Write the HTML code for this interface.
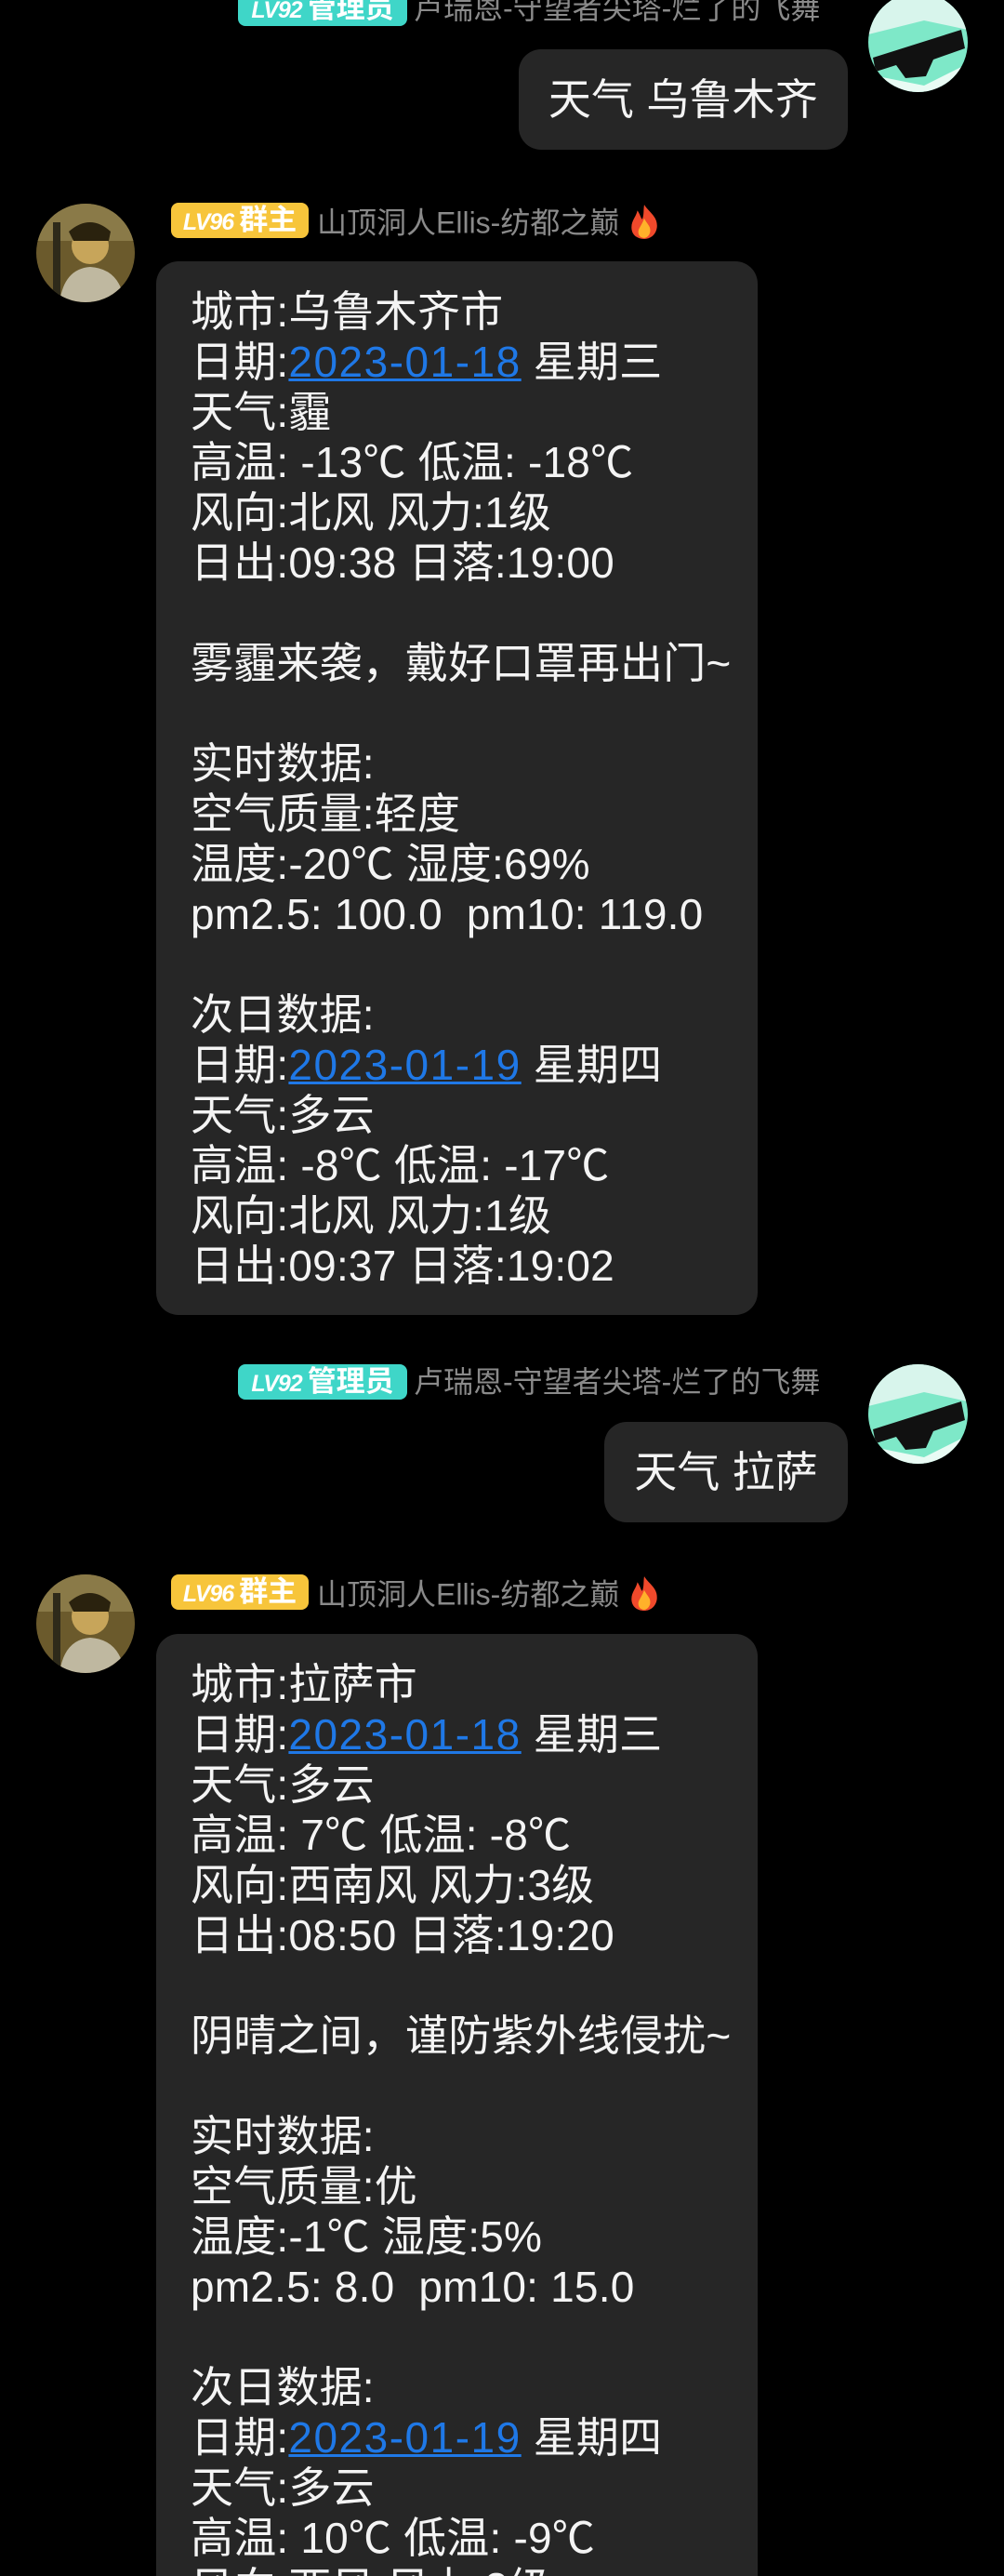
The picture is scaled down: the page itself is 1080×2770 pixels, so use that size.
<!DOCTYPE html>
<html><head><meta charset="utf-8"><style>
*{margin:0;padding:0;box-sizing:border-box}
html,body{width:1080px;height:2770px;background:#000;overflow:hidden}
body{position:relative;font-family:"Liberation Sans","Noto Sans CJK SC",sans-serif}
.badge{position:absolute;height:38px;border-radius:8px;color:#fff;font-weight:bold;font-size:31px;line-height:38px;padding:0 8px;white-space:nowrap;text-align:center}
.badge i{font-style:italic;font-size:25px;letter-spacing:-1px;margin-right:6px}
.adm{background:#3fd6c8;width:182px}
.own{background:#f7c53b;width:148px}
.name{position:absolute;color:#8a8a8a;font-size:32px;line-height:38px;white-space:nowrap;letter-spacing:0px}
.bub{position:absolute;background:#262626;border-radius:24px;color:#f4f4f4;font-size:46px;line-height:54px;white-space:pre;padding:27px 37px;letter-spacing:0.2px}
.bub a{color:#1f78e6;text-decoration:underline;text-decoration-thickness:3px;letter-spacing:1.5px}
.short{padding:0 32px;line-height:108px;font-size:46px;right:168px}
.av{position:absolute;border-radius:50%;overflow:hidden}
</style></head><body>

<div class="badge adm" style="left:256px;top:-10px"><i>LV92</i>管理员</div>
<div class="name" style="left:445px;top:-10px">卢瑞恩-守望者尖塔-烂了的飞舞</div>
<div class="av" style="left:934px;top:-8px;width:107px;height:107px">
<svg width="107" height="107" viewBox="0 0 107 107"><rect width="107" height="107" fill="#7ee8c8"/><path d="M0 0H107V40L60 30 20 40 0 45Z" fill="#d8f5ec"/><path d="M5 70L100 40 104 60 70 72 62 90 40 92 30 78 8 85Z" fill="#111"/><path d="M10 90L60 100 100 80 107 107H0Z" fill="#e9fbf4"/></svg></div>
<div class="bub short" style="top:53px;height:108px">天气 乌鲁木齐</div>

<div class="av" style="left:39px;top:219px;width:106px;height:106px">
<svg width="106" height="106" viewBox="0 0 106 106"><rect width="106" height="106" fill="#6b5a2c"/><rect x="0" y="0" width="106" height="40" fill="#8a7a48"/><circle cx="58" cy="45" r="20" fill="#c7a55a"/><path d="M35 30Q58 10 80 30L78 40 40 40Z" fill="#2a220e"/><path d="M25 106Q30 70 58 68 90 70 95 106Z" fill="#bfb8a0"/><rect x="18" y="20" width="8" height="80" fill="#2e2a1a"/></svg></div>
<div class="badge own" style="left:184px;top:218px"><i>LV96</i>群主</div>
<div class="name" style="left:341px;top:218px">山顶洞人Ellis-纺都之巅 <span style="display:inline-block;vertical-align:middle"><svg width="36" height="40" viewBox="0 0 34 38"><path d="M17 2C22 10 31 14 30 25 29 33 23 37 17 37 10 37 4 33 4 25 4 18 9 14 10 8 13 12 13 15 15 17 17 12 16 7 17 2Z" fill="#f0492b"/><path d="M17 16C20 22 24 24 23 30 22 34 19 36 17 36 14 36 11 34 11 30 11 26 14 24 17 16Z" fill="#ffb12a"/></svg></span></div>
<div class="bub" style="left:168px;top:281px;width:647px;height:1133px">城市:乌鲁木齐市
日期:<a>2023-01-18</a> 星期三
天气:霾
高温: -13℃ 低温: -18℃
风向:北风 风力:1级
日出:09:38 日落:19:00

雾霾来袭，戴好口罩再出门~

实时数据:
空气质量:轻度
温度:-20℃ 湿度:69%
pm2.5: 100.0  pm10: 119.0

次日数据:
日期:<a>2023-01-19</a> 星期四
天气:多云
高温: -8℃ 低温: -17℃
风向:北风 风力:1级
日出:09:37 日落:19:02</div>

<div class="badge adm" style="left:256px;top:1467px"><i>LV92</i>管理员</div>
<div class="name" style="left:445px;top:1467px">卢瑞恩-守望者尖塔-烂了的飞舞</div>
<div class="av" style="left:934px;top:1467px;width:107px;height:107px">
<svg width="107" height="107" viewBox="0 0 107 107"><rect width="107" height="107" fill="#7ee8c8"/><path d="M0 0H107V40L60 30 20 40 0 45Z" fill="#d8f5ec"/><path d="M5 70L100 40 104 60 70 72 62 90 40 92 30 78 8 85Z" fill="#111"/><path d="M10 90L60 100 100 80 107 107H0Z" fill="#e9fbf4"/></svg></div>
<div class="bub short" style="top:1529px;height:108px">天气 拉萨</div>

<div class="av" style="left:39px;top:1693px;width:106px;height:106px">
<svg width="106" height="106" viewBox="0 0 106 106"><rect width="106" height="106" fill="#6b5a2c"/><rect x="0" y="0" width="106" height="40" fill="#8a7a48"/><circle cx="58" cy="45" r="20" fill="#c7a55a"/><path d="M35 30Q58 10 80 30L78 40 40 40Z" fill="#2a220e"/><path d="M25 106Q30 70 58 68 90 70 95 106Z" fill="#bfb8a0"/><rect x="18" y="20" width="8" height="80" fill="#2e2a1a"/></svg></div>
<div class="badge own" style="left:184px;top:1693px"><i>LV96</i>群主</div>
<div class="name" style="left:341px;top:1693px">山顶洞人Ellis-纺都之巅 <span style="display:inline-block;vertical-align:middle"><svg width="36" height="40" viewBox="0 0 34 38"><path d="M17 2C22 10 31 14 30 25 29 33 23 37 17 37 10 37 4 33 4 25 4 18 9 14 10 8 13 12 13 15 15 17 17 12 16 7 17 2Z" fill="#f0492b"/><path d="M17 16C20 22 24 24 23 30 22 34 19 36 17 36 14 36 11 34 11 30 11 26 14 24 17 16Z" fill="#ffb12a"/></svg></span></div>
<div class="bub" style="left:168px;top:1757px;width:647px;height:1133px">城市:拉萨市
日期:<a>2023-01-18</a> 星期三
天气:多云
高温: 7℃ 低温: -8℃
风向:西南风 风力:3级
日出:08:50 日落:19:20

阴晴之间，谨防紫外线侵扰~

实时数据:
空气质量:优
温度:-1℃ 湿度:5%
pm2.5: 8.0  pm10: 15.0

次日数据:
日期:<a>2023-01-19</a> 星期四
天气:多云
高温: 10℃ 低温: -9℃
风向:西风 风力:3级</div>
</body></html>
